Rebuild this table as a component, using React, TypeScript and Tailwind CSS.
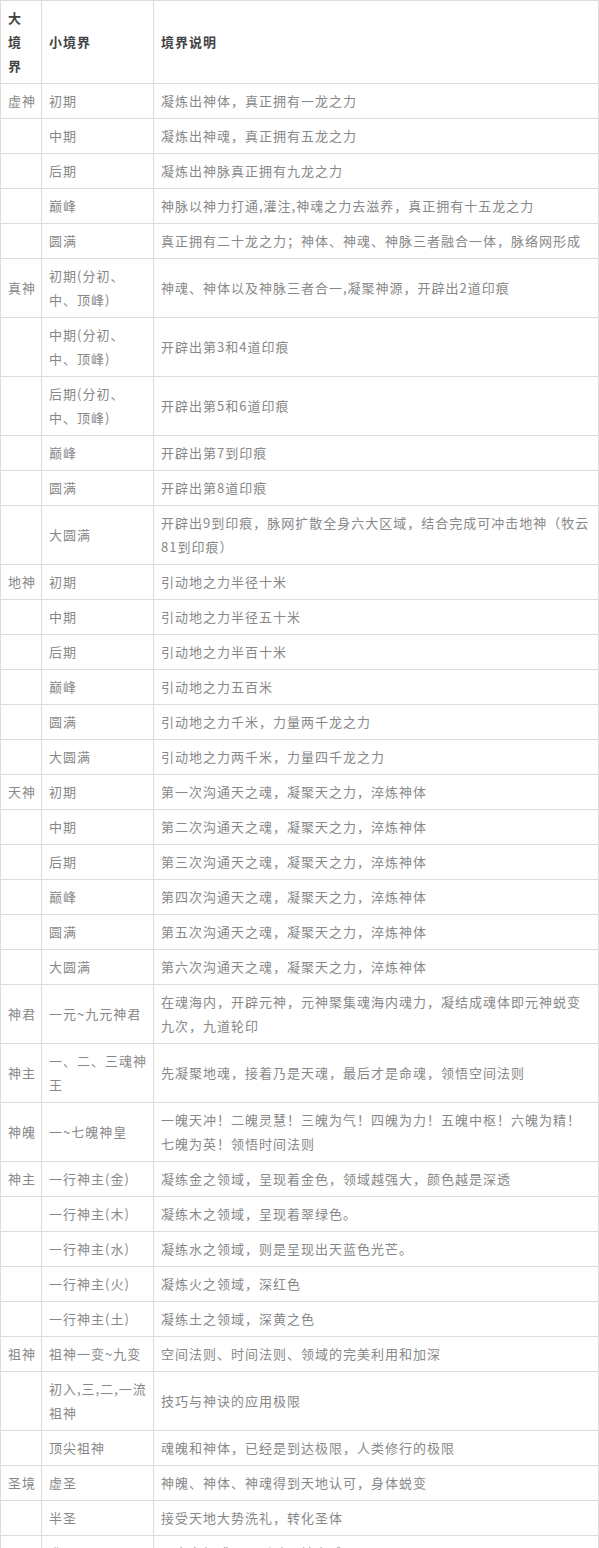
const rows: [string, string, string][] = [
  ['虚神', '初期', '凝炼出神体，真正拥有一龙之力'],
  ['', '中期', '凝炼出神魂，真正拥有五龙之力'],
  ['', '后期', '凝炼出神脉真正拥有九龙之力'],
  ['', '巅峰', '神脉以神力打通,灌注,神魂之力去滋养，真正拥有十五龙之力'],
  ['', '圆满', '真正拥有二十龙之力；神体、神魂、神脉三者融合一体，脉络网形成'],
  ['真神', '初期(分初、\n中、顶峰)', '神魂、神体以及神脉三者合一,凝聚神源，开辟出2道印痕'],
  ['', '中期(分初、\n中、顶峰)', '开辟出第3和4道印痕'],
  ['', '后期(分初、\n中、顶峰)', '开辟出第5和6道印痕'],
  ['', '巅峰', '开辟出第7到印痕'],
  ['', '圆满', '开辟出第8道印痕'],
  ['', '大圆满', '开辟出9到印痕，脉网扩散全身六大区域，结合完成可冲击地神（牧云\n81到印痕）'],
  ['地神', '初期', '引动地之力半径十米'],
  ['', '中期', '引动地之力半径五十米'],
  ['', '后期', '引动地之力半百十米'],
  ['', '巅峰', '引动地之力五百米'],
  ['', '圆满', '引动地之力千米，力量两千龙之力'],
  ['', '大圆满', '引动地之力两千米，力量四千龙之力'],
  ['天神', '初期', '第一次沟通天之魂，凝聚天之力，淬炼神体'],
  ['', '中期', '第二次沟通天之魂，凝聚天之力，淬炼神体'],
  ['', '后期', '第三次沟通天之魂，凝聚天之力，淬炼神体'],
  ['', '巅峰', '第四次沟通天之魂，凝聚天之力，淬炼神体'],
  ['', '圆满', '第五次沟通天之魂，凝聚天之力，淬炼神体'],
  ['', '大圆满', '第六次沟通天之魂，凝聚天之力，淬炼神体'],
  ['神君', '一元~九元神君', '在魂海内，开辟元神，元神聚集魂海内魂力，凝结成魂体即元神蜕变\n九次，九道轮印'],
  ['神主', '一、二、三魂神\n王', '先凝聚地魂，接着乃是天魂，最后才是命魂，领悟空间法则'],
  ['神魄', '一~七魄神皇', '一魄天冲！二魄灵慧！三魄为气！四魄为力！五魄中枢！六魄为精！\n七魄为英！领悟时间法则'],
  ['神主', '一行神主(金)', '凝练金之领域，呈现着金色，领域越强大，颜色越是深透'],
  ['', '一行神主(木)', '凝练木之领域，呈现着翠绿色。'],
  ['', '一行神主(水)', '凝练水之领域，则是呈现出天蓝色光芒。'],
  ['', '一行神主(火)', '凝炼火之领域，深红色'],
  ['', '一行神主(土)', '凝练土之领域，深黄之色'],
  ['祖神', '祖神一变~九变', '空间法则、时间法则、领域的完美利用和加深'],
  ['', '初入,三,二,一流\n祖神', '技巧与神诀的应用极限'],
  ['', '顶尖祖神', '魂魄和神体，已经是到达极限，人类修行的极限'],
  ['圣境', '虚圣', '神魄、神体、神魂得到天地认可，身体蜕变'],
  ['', '半圣', '接受天地大势洗礼，转化圣体'],
  ['', '准圣', '圣之力初成，可引动天地之威'],
];

const cell =
  'border-r border-b border-[#dddddd] px-[7px] py-[5px] align-middle whitespace-pre overflow-hidden';

export default function App() {
  return (
    <div className="bg-white w-[599px] font-['Noto_Sans_CJK_SC',sans-serif] text-[13px] tracking-[1px] leading-[24px]">
      <table className="w-[599px] table-fixed border-separate border-spacing-0 border-l border-t border-[#dddddd]">
        <thead>
          <tr className="text-left text-[#444444]">
            <th className={`${cell} w-[41px] font-semibold`}>{'大\n境\n界'}</th>
            <th className={`${cell} w-[112px] font-semibold`}>小境界</th>
            <th className={`${cell} font-semibold`}>境界说明</th>
          </tr>
        </thead>
        <tbody className="text-[#888888]">
          {rows.map((r, i) => (
            <tr key={i}>
              <td className={cell}>{r[0]}</td>
              <td className={cell}>{r[1]}</td>
              <td className={cell}>{r[2]}</td>
            </tr>
          ))}
        </tbody>
      </table>
    </div>
  );
}
